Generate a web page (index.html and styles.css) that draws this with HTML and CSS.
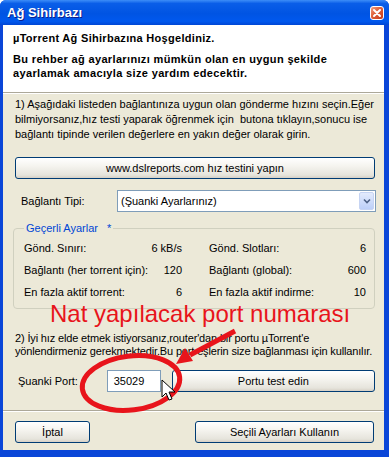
FILE: index.html
```html
<!DOCTYPE html>
<html>
<head>
<meta charset="utf-8">
<link rel="stylesheet" href="styles.css">
</head>
<body>
<div class="window">
  <div class="titlebar">
    <span class="title">Ağ Sihirbazı</span>
    <span class="close">
      <svg width="10" height="10" viewBox="0 0 10 10"><path d="M2 2 L8 8 M8 2 L2 8" stroke="#fff" stroke-width="2" stroke-linecap="round"/></svg>
    </span>
  </div>

  <div class="client">
    <div class="header">
      <p class="head-title">µTorrent Ağ Sihirbazına Hoşgeldiniz.</p>
      <p class="head-text">Bu rehber ağ ayarlarınızı mümkün olan en uygun şekilde<br>ayarlamak amacıyla size yardım edecektir.</p>
    </div>

    <div class="content">
      <p class="step">1) Aşağıdaki listeden bağlantınıza uygun olan gönderme hızını seçin.Eğer<br>bilmiyorsanız,hız testi yaparak öğrenmek için &nbsp;butona tıklayın,sonucu ise<br>bağlantı tipinde verilen değerlere en yakın değer olarak girin.</p>

      <div class="btn btn-wide">www.dslreports.com hız testini yapın</div>

      <div class="type-row">
        <span class="type-label">Bağlantı Tipi:</span>
        <div class="combo">
          <span class="combo-text">(Şuanki Ayarlarınız)</span>
          <span class="combo-btn">
            <svg width="8" height="6" viewBox="0 0 8 6"><path d="M1 1.5 L4 4.5 L7 1.5" fill="none" stroke="#4d6185" stroke-width="1.6"/></svg>
          </span>
        </div>
      </div>

      <fieldset class="group">
        <legend>Geçerli Ayarlar <span class="star">*</span></legend>
        <div class="grid">
          <div class="cell"><span>Gönd. Sınırı:</span><span>6 kB/s</span></div>
          <div class="cell"><span>Gönd. Slotları:</span><span>6</span></div>
          <div class="cell"><span>Bağlantı (her torrent için):</span><span>120</span></div>
          <div class="cell"><span>Bağlantı (global):</span><span>600</span></div>
          <div class="cell"><span>En fazla aktif torrent:</span><span>6</span></div>
          <div class="cell"><span>En fazla aktif indirme:</span><span>10</span></div>
        </div>
      </fieldset>

      <p class="step step2">2) İyi hız elde etmek istiyorsanız,router'dan bir portu µTorrent'e<br>yönlendirmeniz gerekmektedir.Bu port eşlerin size bağlanması için kullanılır.</p>

      <div class="port-row">
        <span class="port-label">Şuanki Port:</span>
        <span class="port-input">35029</span>
        <div class="btn btn-port">Portu test edin</div>
      </div>
    </div>

    <div class="footer">
      <div class="btn btn-cancel">İptal</div>
      <div class="btn btn-apply">Seçili Ayarları Kullanın</div>
    </div>
  </div>

  <!-- kırmızı not -->
  <div class="note">Nat yapılacak port numarası</div>
  <svg class="marks" width="389" height="457" viewBox="0 0 389 457">
    <ellipse cx="131" cy="383" rx="49" ry="27" transform="rotate(-7 131 383)" fill="none" stroke="#e8141b" stroke-width="5"/>
    <line x1="235" y1="331" x2="190" y2="355" stroke="#e8141b" stroke-width="5"/>
    <polygon points="176,364 193,361 185,348" fill="#e8141b"/>
    <path d="M162 380 L162 397 L166 393 L169 400 L172 399 L169 392 L175 392 Z" fill="#fff" stroke="#000" stroke-width="1" stroke-linejoin="miter"/>
  </svg>
</div>
</body>
</html>
```

FILE: styles.css
```css
body {
  margin: 0;
  background: #fff;
  font-family: Tahoma, "Liberation Sans", Arial, sans-serif;
  font-size: 11px;
  color: #000;
}

p {
  margin: 0;
}

.window {
  position: relative;
  width: 389px;
  height: 457px;
  background: #0a46d8;
  display: flex;
  flex-direction: column;
  border-radius: 6px 6px 0 0;
  overflow: hidden;
}

/* title bar */
.titlebar {
  height: 25px;
  flex: none;
  display: flex;
  align-items: center;
  justify-content: space-between;
  padding: 0 5px 0 7px;
  background: linear-gradient(#3d8df8 0%, #0a5ee8 14%, #0054e3 55%, #0058ee 85%, #0046d4 100%);
}

.title {
  color: #fff;
  font-weight: bold;
  font-size: 13px;
  text-shadow: 1px 1px 0 #0a1e8c;
}

.close {
  width: 14px;
  height: 14px;
  box-sizing: border-box;
  border: 1px solid #fff;
  border-radius: 3px;
  background: linear-gradient(135deg, #f0a186 0%, #e0643d 40%, #c4391a 100%);
  display: flex;
  align-items: center;
  justify-content: center;
}

/* window body */
.client {
  flex: 1;
  margin: 0 5px 7px 3px;
  background: #ece9d8;
  display: flex;
  flex-direction: column;
}

.header {
  height: 68px;
  flex: none;
  box-sizing: border-box;
  padding: 6px 10px 0 10px;
  background: #fff;
  border-bottom: 1px solid #aca899;
  box-shadow: 0 1px 0 #fff;
}

.head-title {
  font-weight: bold;
  line-height: 14px;
  letter-spacing: 0.3px;
}

.head-text {
  font-weight: bold;
  line-height: 14px;
  margin-top: 7px;
  letter-spacing: 0.35px;
}

.content {
  padding: 0 9px 0 12px;
}

.step {
  margin-top: 4px;
  line-height: 15px;
  white-space: nowrap;
}

.step2 {
  margin-top: 23px;
  line-height: 13px;
  letter-spacing: -0.15px;
}

/* XP buttons */
.btn {
  box-sizing: border-box;
  height: 22px;
  border: 1px solid #003c74;
  border-radius: 3px;
  background: linear-gradient(#ffffff 0%, #f5f4ef 40%, #e6e4dc 85%, #d6d0c5 100%);
  display: flex;
  align-items: center;
  justify-content: center;
  white-space: nowrap;
}

.btn-wide {
  margin-top: 15px;
}

.type-row {
  display: flex;
  align-items: center;
  margin-top: 11px;
}

.type-label {
  width: 96px;
  padding-left: 6px;
}

.combo {
  flex: 1;
  height: 22px;
  box-sizing: border-box;
  margin-right: -1px;
  border: 1px solid #7f9db9;
  background: #fff;
  display: flex;
  align-items: center;
  justify-content: space-between;
  padding: 1px 1px 1px 3px;
}

.combo-btn {
  width: 15px;
  height: 18px;
  box-sizing: border-box;
  border-radius: 2px;
  border: 1px solid #c6d4f3;
  background: linear-gradient(#e3ebfd, #bccff8);
  display: flex;
  align-items: center;
  justify-content: center;
}

/* current settings group */
.group {
  margin: 10px 0 0 -2px;
  padding: 2px 6px 5px 10px;
  border: 1px solid #d0d0bf;
  border-radius: 4px;
  min-width: 0;
}

.group legend {
  padding: 0 2px;
  color: #0046d5;
  line-height: 13px;
}

.star {
  margin-left: 6px;
}

.grid {
  display: grid;
  grid-template-columns: 158px 157px;
  column-gap: 27px;
}

.cell {
  height: 22px;
  display: flex;
  align-items: center;
  justify-content: space-between;
  white-space: nowrap;
}

/* port row */
.port-row {
  display: flex;
  align-items: center;
  margin-top: 12px;
}

.port-label {
  width: 89px;
  padding-left: 3px;
}

.port-input {
  width: 54px;
  height: 22px;
  box-sizing: border-box;
  border: 1px solid #7f9db9;
  background: #fff;
  padding-left: 6px;
  display: flex;
  align-items: center;
}

.btn-port {
  margin-left: 11px;
  width: 204px;
}

.footer {
  margin-top: auto;
  height: 40px;
  box-sizing: border-box;
  border-top: 1px solid #aca899;
  box-shadow: inset 0 1px 0 #fff;
  display: flex;
  align-items: flex-start;
  justify-content: space-between;
  padding: 10px 10px 0 12px;
}

.btn-cancel {
  width: 75px;
}

.btn-apply {
  width: 179px;
}

/* annotation over the screenshot */
.note {
  position: absolute;
  left: 50px;
  top: 302px;
  font-family: "Liberation Sans", Arial, sans-serif;
  font-size: 24px;
  line-height: 24px;
  color: #e8141b;
  white-space: nowrap;
}

.marks {
  position: absolute;
  left: 0;
  top: 0;
  pointer-events: none;
}
```
